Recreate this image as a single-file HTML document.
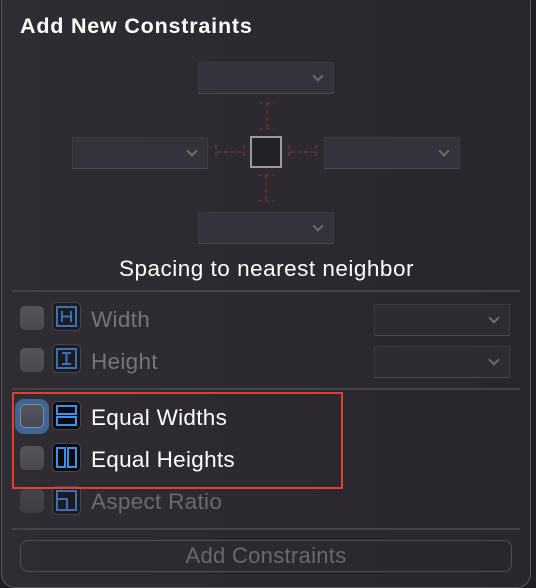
<!DOCTYPE html>
<html><head><style>
html,body{margin:0;padding:0;width:536px;height:582px;overflow:hidden;background:#1f1e22;font-family:"Liberation Sans",sans-serif;}
.panel{position:absolute;left:1px;top:-12px;width:530px;height:600px;border:1px solid #5d5b63;border-radius:14px;background:linear-gradient(90deg,#2f2d33,#29262e);box-sizing:border-box;}
.abs{position:absolute;}
.dd{position:absolute;width:136px;height:32px;background:#34323a;border:1px solid #3d3b42;border-bottom:1px solid #4a4850;box-sizing:border-box;}
.dd::after{content:"";position:absolute;right:11px;top:9px;width:6px;height:6px;border-right:2px solid #6f6d74;border-bottom:2px solid #6f6d74;transform:rotate(45deg);}
.sep{position:absolute;left:12px;width:508px;height:2px;background:#45434a;}
.cb{position:absolute;left:20px;width:24px;height:24px;border-radius:5px;background:linear-gradient(#56545b,#4a4850);}
.ic{position:absolute;left:52px;width:29px;height:29px;border-radius:5px;background:#1c1b1f;border:1px solid #48464d;box-sizing:border-box;}
.lbl{position:absolute;left:91px;font-size:22.5px;color:#77757b;line-height:26px;letter-spacing:0.3px;}
.on{color:#fff;}
</style></head><body>
<div class="panel"></div>
<div class="abs" style="left:20px;top:14px;font-size:21.5px;font-weight:bold;color:#fff;letter-spacing:0.8px;">Add New Constraints</div>
<div class="dd" style="left:198px;top:62px;"></div>
<div class="dd" style="left:72px;top:137px;"></div>
<div class="dd" style="left:324px;top:137px;"></div>
<div class="dd" style="left:198px;top:212px;"></div>
<svg class="abs" style="left:0;top:0" width="536" height="260">
<g stroke="#7a3535" stroke-width="1.3" fill="none" stroke-dasharray="4 3">
<path d="M259 103h16M267 103v25M259 129h16"/>
<path d="M258 175h16M266 175v25M258 201h16"/>
<path d="M216 145v14M217 152h26M244 145v14"/>
<path d="M289 145v14M290 152h25M316 145v14"/>
</g>
<rect x="251" y="137" width="30" height="30" fill="#222125" stroke="#9b9a9e" stroke-width="2"/>
</svg>
<div class="abs" style="left:119px;top:256px;font-size:22.5px;color:#fff;white-space:nowrap;letter-spacing:0.5px;">Spacing to nearest neighbor</div>
<div class="sep" style="top:290px"></div>
<div class="cb" style="top:306px"></div>
<div class="ic" style="top:302px"><svg width="27" height="27"><rect x="4" y="4" width="19" height="19" fill="none" stroke="#3d6fb5" stroke-width="2"/><path d="M9 8v11M18 8v11M9 13.5h9" stroke="#3d6fb5" stroke-width="2"/></svg></div>
<div class="lbl" style="top:307px">Width</div>
<div class="dd" style="left:374px;top:304px;background:#2e2c33"></div>
<div class="cb" style="top:348px"></div>
<div class="ic" style="top:344px"><svg width="27" height="27"><rect x="4" y="4" width="19" height="19" fill="none" stroke="#3d6fb5" stroke-width="2"/><path d="M9 8h9M9 19h9M13.5 8v11" stroke="#3d6fb5" stroke-width="2"/></svg></div>
<div class="lbl" style="top:349px">Height</div>
<div class="dd" style="left:374px;top:346px;background:#2e2c33"></div>
<div class="sep" style="top:388px"></div>
<div class="abs" style="left:15px;top:399px;width:34px;height:35px;border-radius:9px;background:#3f6590;"></div>
<div class="cb" style="top:404px;left:20px;width:24px;height:24px;border:1px solid #6d90b8;box-sizing:border-box;"></div>
<div class="ic" style="top:401px;background:#0a0a0c"><svg width="27" height="27"><rect x="4" y="4" width="19" height="8" fill="none" stroke="#3d8ff0" stroke-width="2"/><rect x="4" y="15" width="19" height="8" fill="none" stroke="#3d8ff0" stroke-width="2"/></svg></div>
<div class="lbl on" style="top:405px">Equal Widths</div>
<div class="cb" style="top:446px"></div>
<div class="ic" style="top:443px;background:#0a0a0c"><svg width="27" height="27"><rect x="4" y="4" width="8" height="19" fill="none" stroke="#3d8ff0" stroke-width="2"/><rect x="15" y="4" width="8" height="19" fill="none" stroke="#3d8ff0" stroke-width="2"/></svg></div>
<div class="lbl on" style="top:447px">Equal Heights</div>
<div class="cb" style="top:489px;opacity:.6"></div>
<div class="ic" style="top:486px"><svg width="27" height="27"><rect x="4" y="4" width="19" height="19" fill="none" stroke="#3d6fb5" stroke-width="2"/><path d="M4 12h10v11" fill="none" stroke="#3d6fb5" stroke-width="2"/></svg></div>
<div class="lbl" style="top:489px;color:#6c6a70">Aspect Ratio</div>
<div class="abs" style="left:12px;top:392px;width:331px;height:97px;border:2px solid #e0402d;box-sizing:border-box;"></div>
<div class="sep" style="top:528px"></div>
<div class="abs" style="left:20px;top:540px;width:492px;height:32px;border:1.5px solid #4f4d55;border-radius:8px;box-sizing:border-box;text-align:center;line-height:29px;font-size:22px;color:#6a686e;letter-spacing:0.3px;">Add Constraints</div>
</body></html>
